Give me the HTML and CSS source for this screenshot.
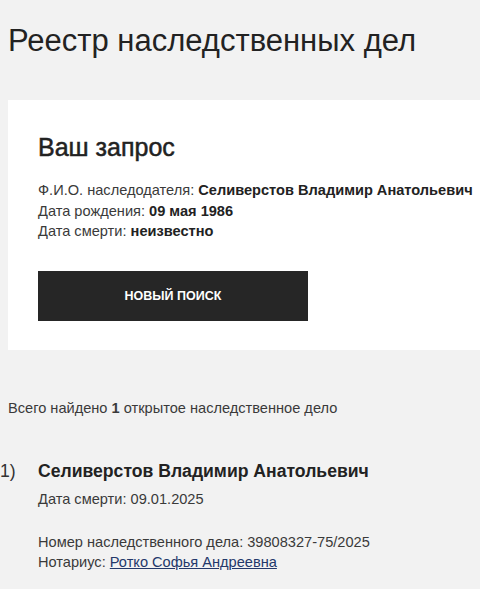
FILE: index.html
```html
<!DOCTYPE html>
<html lang="ru">
<head>
<meta charset="utf-8">
<title>Реестр наследственных дел</title>
<link rel="stylesheet" href="styles.css">
</head>
<body>
<div class="page">
  <h1 class="title">Реестр наследственных дел</h1>
  <section class="card">
    <h2 class="card-title">Ваш запрос</h2>
    <div class="info">
      <div>Ф.И.О. наследодателя: <b>Селиверстов Владимир Анатольевич</b></div>
      <div>Дата рождения: <b>09 мая 1986</b></div>
      <div>Дата смерти: <b>неизвестно</b></div>
    </div>
    <button class="btn">НОВЫЙ ПОИСК</button>
  </section>
  <p class="summary">Всего найдено <b>1</b> открытое наследственное дело</p>
  <ol class="results">
    <li class="result">
      <span class="num">1)</span>
      <div class="result-body">
        <div class="result-name">Селиверстов Владимир Анатольевич</div>
        <div class="result-line">Дата смерти: 09.01.2025</div>
        <div class="result-details">
          <div>Номер наследственного дела: 39808327-75/2025</div>
          <div>Нотариус: <a class="link" href="#">Ротко Софья Андреевна</a></div>
        </div>
      </div>
    </li>
  </ol>
</div>
</body>
</html>
```
FILE: styles.css
```css
html, body {
  margin: 0;
  padding: 0;
  background: #f2f2f2;
  overflow: hidden;
}
body {
  font-family: "Liberation Sans", Arial, sans-serif;
  color: #222;
}
.page {
  padding: 0 0 0 8px;
}
.title {
  margin: 0;
  padding-top: 23px;
  font-size: 31px;
  font-weight: normal;
  line-height: 36px;
  color: #222;
  white-space: nowrap;
}
.card {
  margin-top: 41px;
  background: #fff;
  padding: 34px 0 29px 30px;
  white-space: nowrap;
}
.card-title {
  margin: 0;
  font-size: 25px;
  font-weight: normal;
  -webkit-text-stroke: 0.5px #222;
  line-height: 26px;
}
.info {
  margin-top: 20px;
  font-size: 14.6px;
  line-height: 20.5px;
  color: #3a3a3a;
}
.info b {
  color: #222;
}
.btn {
  display: block;
  margin-top: 29px;
  width: 270px;
  height: 50px;
  border: none;
  background: #262626;
  color: #fff;
  font-family: "Liberation Sans", Arial, sans-serif;
  font-weight: bold;
  font-size: 12.5px;
  padding: 0;
}
.summary {
  margin: 49px 0 0 0;
  font-size: 14.6px;
  line-height: 18px;
  color: #3a3a3a;
  white-space: nowrap;
}
.results {
  list-style: none;
  margin: 42px 0 0 -8px;
  padding: 0;
}
.result {
  display: flex;
}
.num {
  width: 38px;
  font-size: 17.6px;
  line-height: 24px;
  color: #333;
}
.result-name {
  font-size: 17.6px;
  font-weight: bold;
  line-height: 24px;
  color: #222;
}
.result-line {
  margin-top: 6px;
  font-size: 14.6px;
  line-height: 20px;
  color: #3a3a3a;
}
.result-details {
  margin-top: 23px;
  font-size: 14.6px;
  line-height: 20.5px;
  color: #3a3a3a;
}
.link {
  color: #23386a;
  text-decoration: underline;
}
```
